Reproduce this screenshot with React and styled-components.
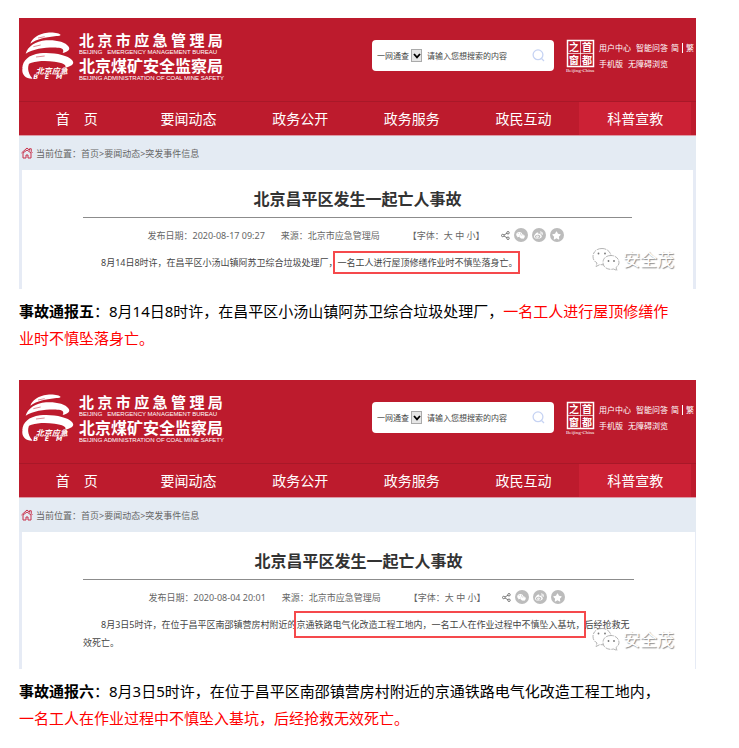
import React from 'react'
import styled, {createGlobalStyle} from 'styled-components';
import {FaStar, FaWeibo, FaWeixin} from 'react-icons/fa';

const NAV = ['首　页', '要闻动态', '政务公开', '政务服务', '政民互动', '科普宣教'];

const REPORTS = [
    {
        id: 'five',
        date: '2020-08-17 09:27',
        edge: 3,
        before: '8月14日8时许，在昌平区小汤山镇阿苏卫综合垃圾处理厂，',
        marked: '一名工人进行屋顶修缮作业时不慎坠落身亡。',
        after: '',
        label: '事故通报五',
        text: '8月14日8时许，在昌平区小汤山镇阿苏卫综合垃圾处理厂，',
        alert: '一名工人进行屋顶修缮作业时不慎坠落身亡。'
    }, {
        id: 'six',
        date: '2020-08-04 20:01',
        edge: 1,
        before: '8月3日5时许，在位于昌平区南邵镇营房村附近的',
        marked: '京通铁路电气化改造工程工地内，一名工人在作业过程中不慎坠入基坑，',
        after: '后经抢救无效死亡。',
        label: '事故通报六',
        text: '8月3日5时许，在位于昌平区南邵镇营房村附近的京通铁路电气化改造工程工地内，',
        alert: '一名工人在作业过程中不慎坠入基坑，后经抢救无效死亡。'
    }
];

const BureauLogo = () => (
    <svg width="54" height="50" viewBox="33 66 162 150" fill="#fff" aria-hidden="true">
        <path d="M61 104 C66 88 84 74 112 71 C132 69 149 73 152 78 C148 82 140 80 134 82 C106 85 82 90 61 104Z"/>
        <path d="M47 134 C54 112 76 97 108 94 C136 92 166 98 176 113 C181 121 176 127 158 132 C164 121 156 116 142 116 C106 115 72 119 47 134Z"/>
        <path d="M37 178 C38 154 56 138 90 133 C128 129 172 138 186 153 C194 163 190 170 166 176 C170 166 158 161 134 158 C94 153 54 157 37 178Z"/>
        <path d="M37 180 C40 166 48 160 62 156 C52 168 50 190 68 209 C48 210 35 198 37 180Z"/>
        <path d="M84 87 L104 83 M70 113 L92 108 M78 144 L104 141" stroke="#bd1b2d" strokeWidth="1.5"/>
        <text x="77" y="196" fontSize="24" fontWeight="700" fontStyle="italic" fontFamily="'Noto Sans CJK SC', sans-serif">北京应急</text>
        <path d="M70 197h106l-3 14h-106z" fill="#bd1b2d"/>
        <text x="70 104 138" y="211" fontSize="19" fontWeight="700" fontStyle="italic" fontFamily="'DejaVu Sans', sans-serif">BEM</text>
    </svg>
)

const Emblem = () => (
    <svg width="32" height="34" viewBox="0 0 32 34" aria-label="首都之窗">
        <path d="M2.5 1.5h26v26h-26z" fill="none" stroke="#fff" strokeWidth="1.5"/>
        <path d="M15.5 2v25M3 14.5h25" stroke="#fff" strokeWidth="0.7"/>
        <g fill="#fff" fontSize="10" fontWeight="700" fontFamily="'Noto Sans CJK SC', sans-serif">
            <text x="4" y="12">之</text>
            <text x="17" y="12">首</text>
            <text x="4" y="25">窗</text>
            <text x="17" y="25">都</text>
        </g>
        <text x="1" y="33" fill="#fff" fontSize="5" fontFamily="'Liberation Serif', serif">Beijing-China</text>
    </svg>
)

const HomeIcon = () => (
    <svg width="12" height="12" viewBox="0 0 24 24" fill="none" stroke="#c8304a" strokeWidth="2" aria-hidden="true">
        <path d="M1 12 L12 2 L17 6.500 V3.500 H20.500 V9.500 L23 12"/>
        <path d="M4 12 V22 H10 V16 H14 V22 H20 V12 L12 6 Z"/>
    </svg>
)

const ShareIcon = () => (
    <svg width="9" height="9" viewBox="0 0 18 18" fill="none" stroke="#666" strokeWidth="1.7" aria-hidden="true">
        <circle cx="3.500" cy="9" r="2.500"/>
        <circle cx="14" cy="3.500" r="2.500"/>
        <circle cx="14" cy="14.500" r="2.500"/>
        <path d="M6 8 L12 4.500 M6 10 L12 13.500"/>
    </svg>
)

const WechatOutline = () => (
    <svg width="28" height="25" viewBox="0 0 28 25" fill="#fff" stroke="#aaa" strokeWidth="0.9" strokeDasharray="5 1" aria-hidden="true">
        <path d="M10 1.500 C4.500 1.500 1 5 1 9.500 C1 12.500 2.500 14.500 5 16 L4 19.500 L8 17.500 C14 19 19 15 19 9.500 C19 5 15 1.500 10 1.500Z"/>
        <path d="M19 8.500 C14 8.500 11 11.500 11 15.500 C11 20 15.500 23.500 21.500 22 L25 23.500 L24 20.500 C26 19 27 17.500 27 15.500 C27 11.500 23.500 8.500 19 8.500Z"/>
        <g fill="#777" stroke="none">
            <circle cx="6.500" cy="6.500" r="0.900"/>
            <circle cx="13" cy="6.500" r="0.900"/>
            <circle cx="16.500" cy="14" r="0.900"/>
            <circle cx="22" cy="14" r="0.900"/>
        </g>
    </svg>
)

const Banner = ({id}) => (
    <header>
        <BannerTop>
            <Brand href="#home">
                <BureauLogo/>
                <BrandNames>
                    <BrandName $size={15}>北 京 市 应 急 管 理 局</BrandName>
                    <BrandEnglish>BEIJING&nbsp;&nbsp; EMERGENCY MANAGEMENT BUREAU</BrandEnglish>
                    <BrandName $size={16}>北京煤矿安全监察局</BrandName>
                    <BrandEnglish>BEIJING ADMINISTRATION OF COAL MINE SAFETY</BrandEnglish>
                </BrandNames>
            </Brand>
            <SearchForm>
                <ScopePicker>
                    <select id={`scope-${id}`} aria-label="一网通查">
                        <option>一网通查</option>
                    </select>
                    <ArrowBox>
                        <svg width="8" height="6" viewBox="0 0 8 6" fill="none" stroke="#000" strokeWidth="1.800">
                            <path d="M1 1 L4 4.300 L7 1"/>
                        </svg>
                    </ArrowBox>
                </ScopePicker>
                <input id={`search-${id}`} type="text" placeholder="请输入您想搜索的内容" aria-label="请输入您想搜索的内容"/>
                <button type="button" aria-label="搜索">
                    <svg width="13" height="13" viewBox="0 0 13 13" fill="none" stroke="#c6d3f3" strokeWidth="1.300">
                        <circle cx="6" cy="5.800" r="4.900"/>
                        <path d="M9.500 9.500 L12 12"/>
                    </svg>
                </button>
            </SearchForm>
            <Tools>
                <Emblem/>
                <ToolLinks>
                    <ToolRow>
                        <a href="#user">用户中心</a>
                        <a href="#ask">智能问答</a>
                        <Scripts>
                            <a href="#simplified">简</a>
                            <i/>
                            <a href="#traditional">繁</a>
                        </Scripts>
                    </ToolRow>
                    <ToolRow>
                        <a href="#mobile">手机版</a>
                        <a href="#access">无障碍浏览</a>
                    </ToolRow>
                </ToolLinks>
            </Tools>
        </BannerTop>
        <NavBar>
            {NAV.map((item, i) => <NavLink key={item} href="#nav" $active={i === 5}>{item}</NavLink>)}
        </NavBar>
        <Breadcrumb>
            <HomeIcon/>
            <span>当前位置：首页&gt;要闻动态&gt;突发事件信息</span>
        </Breadcrumb>
    </header>
)

const Report = ({data}) => (
    <section>
        <Card>
            <Banner id={data.id}/>
            <Panel $edge={data.edge}>
                <Title>北京昌平区发生一起亡人事故</Title>
                <Meta>
                    <span>发布日期：{data.date}</span>
                    <span>来源：北京市应急管理局</span>
                    <FontSizes>【字体：大 中 小】</FontSizes>
                    <ShareRow>
                        <ShareIcon/>
                        <ShareButton type="button" aria-label="微信"><FaWeixin/></ShareButton>
                        <ShareButton type="button" aria-label="微博"><FaWeibo/></ShareButton>
                        <ShareButton type="button" aria-label="收藏"><FaStar/></ShareButton>
                    </ShareRow>
                </Meta>
                <Article>{data.before}<Marked $loose={!data.after}>{data.marked}</Marked>{data.after}</Article>
            </Panel>
            <Watermark>
                <WechatOutline/>
                <span>安全茂</span>
            </Watermark>
        </Card>
        <Caption>
            <strong>{data.label}</strong>：{data.text}<em>{data.alert}</em>
        </Caption>
    </section>
)

const App = () => {
    return (
        <Page>
            <GlobalStyle/>
            {REPORTS.map((report) => <Report key={report.id} data={report}/>)}
        </Page>
    )
}

export default App

const GlobalStyle = createGlobalStyle `
* {
  box-sizing: border-box;
}

body {
  margin: 0;
  background: #fff;
  font-family: "Noto Sans", "Noto Sans CJK SC", sans-serif;
}

a {
  color: inherit;
  text-decoration: none;
}

svg {
  display: block;
  flex: none;
}
`;

const Page = styled.main `
display: flex;
flex-direction: column;
gap: 28px;
padding: 18px 43px 0 19px;
`;

const Card = styled.div `
position: relative;
`;

const BannerTop = styled.div `
display: flex;
align-items: center;
height: 83px;
padding: 0 2px 8px;
background: #bd1b2d;
color: #fff;
`;

const Brand = styled.a `
display: flex;
align-items: center;
gap: 4px;
`;

const BrandNames = styled.div `
display: flex;
flex-direction: column;
white-space: nowrap;
`;

const BrandName = styled.span `
font-family: "Noto Sans CJK SC", sans-serif;
font-size: ${({$size}) => $size}px;
font-weight: 700;
line-height: 19px;
`;

const BrandEnglish = styled.span `
font-family: "Liberation Sans", sans-serif;
font-size: 6px;
line-height: 7px;
`;

const SearchForm = styled.form `
display: flex;
align-items: center;
width: 182px;
height: 31px;
margin-left: auto;
padding: 0 9px 0 5px;
border-radius: 4px;
background: #fff;

select, input {
  min-width: 0;
  padding: 0;
  border: 0;
  outline: 0;
  background: transparent;
  color: #444;
  font-family: inherit;
  font-size: 8px;
}

input {
  flex: 1;
  margin-left: 5px;
}

input::placeholder {
  color: #444;
  opacity: 1;
}

button {
  padding: 0;
  border: 0;
  background: none;
}
`;

const ScopePicker = styled.span `
display: grid;
align-items: center;
width: 45px;

select {
  grid-area: 1 / 1;
  appearance: none;
  height: 14px;
}
`;

const ArrowBox = styled.span `
display: flex;
align-items: center;
justify-content: center;
grid-area: 1 / 1;
justify-self: end;
width: 11px;
height: 13px;
border: 1px solid #aaa;
background: #e6e6e6;
pointer-events: none;
`;

const Tools = styled.div `
display: flex;
align-items: center;
gap: 2px;
margin-left: 11px;
`;

const ToolLinks = styled.div `
display: flex;
flex-direction: column;
font-size: 8px;
line-height: 16px;
white-space: nowrap;
`;

const ToolRow = styled.div `
display: flex;
gap: 5px;
`;

const Scripts = styled.span `
display: flex;
align-items: center;
gap: 3px;
margin-left: -2px;

i {
  width: 1px;
  height: 10px;
  background: #fff;
}
`;

const NavBar = styled.nav `
display: grid;
grid-template-columns: repeat(6, 1fr);
padding: 0 5px 0 2px;
border-top: 1px solid #a81828;
border-bottom: 1px solid #dc9aa5;
background: #bd1b2d;
`;

const NavLink = styled.a `
background: ${({$active}) => $active ? '#cc2135' : 'transparent'};
color: #fff;
font-size: 14px;
line-height: 33px;
text-align: center;
`;

const Breadcrumb = styled.div `
display: flex;
align-items: center;
gap: 3px;
height: 34px;
padding: 0 2px;
background: #e4ebf3;
color: #666;
font-size: 9px;
`;

const Panel = styled.div `
padding: 13px 61px 17px;
border: solid #e6ebf5;
border-width: 0 ${({$edge}) => $edge}px 0 3px;
background: #fff;
`;

const Title = styled.h1 `
margin: 0;
padding-bottom: 2px;
border-bottom: 1px solid #8c8c8c;
color: #333;
font-size: 16px;
font-weight: 700;
line-height: 32px;
text-align: center;
`;

const Meta = styled.div `
display: flex;
align-items: center;
justify-content: center;
gap: 16px;
height: 34px;
color: #666;
font-size: 9px;
white-space: nowrap;
`;

const FontSizes = styled.span `
margin-left: 12px;
`;

const ShareRow = styled.span `
display: flex;
align-items: center;
gap: 4px;
margin-right: 4px;
`;

const ShareButton = styled.button `
display: flex;
align-items: center;
justify-content: center;
width: 14px;
height: 14px;
padding: 0;
border: 0;
border-radius: 50%;
background: #bcbcbc;
color: #fff;
font-size: 9px;
`;

const Article = styled.p `
margin: 2px 0 0;
color: #444;
font-size: 9px;
line-height: 18px;
text-indent: 2em;
`;

const Marked = styled.span `
padding: ${({$loose}) => $loose ? '3px 0 3px 3px' : '5px 0'};
margin: 0 ${({$loose}) => $loose ? '-5px' : '-2px'};
border: 2px solid #f5494c;
`;

const Watermark = styled.div `
position: absolute;
right: 22px;
bottom: 17px;
display: flex;
align-items: center;
gap: 3px;
color: #fff;
font-size: 17px;
line-height: 24px;
text-shadow: 1px 1px 1px #888;
`;

const Caption = styled.p `
margin: 9px 0 0;
padding-right: 24px;
color: #000;
font-size: 15px;
line-height: 27px;

em {
  color: #f00;
  font-style: normal;
}
`;
